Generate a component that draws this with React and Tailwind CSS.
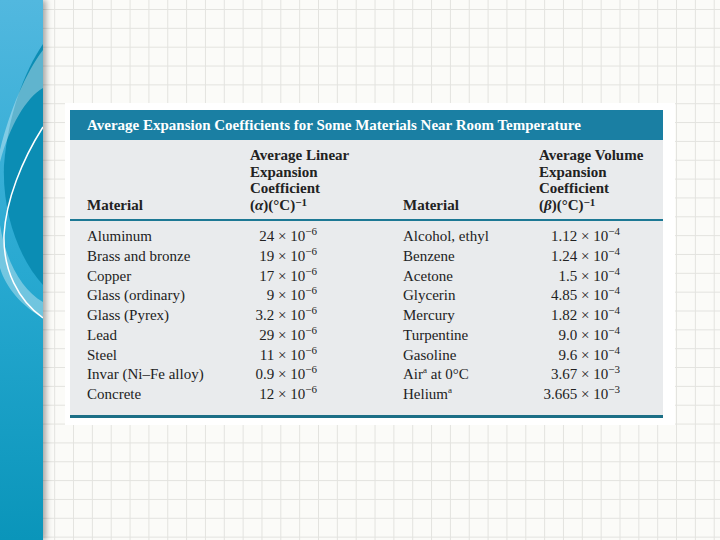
import React from "react"

const serif = { fontFamily: '"Liberation Serif", "Times New Roman", serif' }

const linear = [
  ["Aluminum", "24", "6"],
  ["Brass and bronze", "19", "6"],
  ["Copper", "17", "6"],
  ["Glass (ordinary)", "9", "6"],
  ["Glass (Pyrex)", "3.2", "6"],
  ["Lead", "29", "6"],
  ["Steel", "11", "6"],
  ["Invar (Ni\u2013Fe alloy)", "0.9", "6"],
  ["Concrete", "12", "6"],
]

const volume = [
  [<>Alcohol, ethyl</>, "1.12", "4"],
  [<>Benzene</>, "1.24", "4"],
  [<>Acetone</>, "1.5", "4"],
  [<>Glycerin</>, "4.85", "4"],
  [<>Mercury</>, "1.82", "4"],
  [<>Turpentine</>, "9.0", "4"],
  [<>Gasoline</>, "9.6", "4"],
  [<>Air<sup className="text-[9px] leading-none -top-[6px]">a</sup> at 0°C</>, "3.67", "3"],
  [<>Helium<sup className="text-[9px] leading-none -top-[6px]">a</sup></>, "3.665", "3"],
]

const Num = ({ val, exp }) => (
  <span className="whitespace-nowrap">
    {val} × 10<sup className="text-[11px] leading-none -top-[6px]">−{exp}</sup>
  </span>
)

const Sidebar = () => (
  <div className="w-[43px] h-[540px] shrink-0 shadow-[3px_0_6px_rgba(0,0,0,0.35)] z-10">
    <svg width="43" height="540" viewBox="0 0 43 540" className="block">
      <defs>
        <linearGradient id="sb" x1="0" y1="0" x2="0" y2="1">
          <stop offset="0" stopColor="#52b8df" />
          <stop offset="0.5" stopColor="#28a9d1" />
          <stop offset="1" stopColor="#0a95ba" />
        </linearGradient>
      </defs>
      <rect width="43" height="540" fill="url(#sb)" />
      {/* dark crescent */}
      <path d="M43 44 C24 72 8 115 4 165 C2 215 20 260 43 285 Z" fill="#0b8db4" />
      {/* light feather upper */}
      <path d="M43 50 C26 72 10 110 0 150 L0 162 C10 125 26 98 43 88 Z" fill="#ffffff" opacity="0.35" />
      {/* light band lower */}
      <path d="M0 225 C6 262 22 290 43 302 L43 318 C22 306 6 288 0 268 Z" fill="#ffffff" opacity="0.35" />
      {/* white arc */}
      <path d="M43 127 C22 160 6 200 4 235 C3 270 18 300 43 318" fill="none" stroke="#ffffff" strokeWidth="1.5" />
    </svg>
  </div>
)

export default function App() {
  return (
    <div className="w-[720px] h-[540px] flex overflow-hidden bg-[#fbfbf8]" style={serif}>
      <Sidebar />
      <div className="flex-1 bg-[linear-gradient(to_right,#e3e3df_1px,transparent_1px),linear-gradient(to_bottom,#e3e3df_1px,transparent_1px)] bg-[size:18.85px_18.85px] bg-[position:-26.5px_9px] pt-[103px] pl-[22px]">
        <div className="w-[610px] h-[322px] bg-white pl-[5px] pt-[7px]">
          <div className="w-[593px] bg-[#e9ebed] text-[#222]">
            <div className="h-[30px] bg-[#1a7fa3] flex items-center pl-[17px] text-white font-bold text-[15px]">
              Average Expansion Coefficients for Some Materials Near Room Temperature
            </div>
            <div className="h-[79px] grid grid-cols-[163px_153px_136px_124px] items-end pl-[17px] pb-[6px] font-bold text-[15px] leading-[16.4px]">
              <div>Material</div>
              <div>
                Average Linear
                <br />
                Expansion
                <br />
                Coefficient
                <br />
                (<i>α</i>)(°C)<sup className="text-[11px] leading-none -top-[4px]">−1</sup>
              </div>
              <div>Material</div>
              <div>
                Average Volume
                <br />
                Expansion
                <br />
                Coefficient
                <br />
                (<b><i>β</i></b>)(°C)<sup className="text-[11px] leading-none -top-[4px]">−1</sup>
              </div>
            </div>
            <div className="h-[2px] bg-[#1c7894]" />
            <div className="h-[194px] pt-[6px] text-[15px] leading-[19.75px] grid grid-cols-[163px_67px_86px_136px_81px] auto-rows-[19.75px] pl-[17px]">
              {linear.map(([m, v, e], i) => (
                <React.Fragment key={i}>
                  <div className="whitespace-nowrap">{m}</div>
                  <div className="text-right"><Num val={v} exp={e} /></div>
                  <div />
                  <div className="whitespace-nowrap">{volume[i][0]}</div>
                  <div className="text-right"><Num val={volume[i][1]} exp={volume[i][2]} /></div>
                </React.Fragment>
              ))}
            </div>
            <div className="h-[3px] bg-[#1c6f86]" />
          </div>
        </div>
      </div>
    </div>
  )
}
